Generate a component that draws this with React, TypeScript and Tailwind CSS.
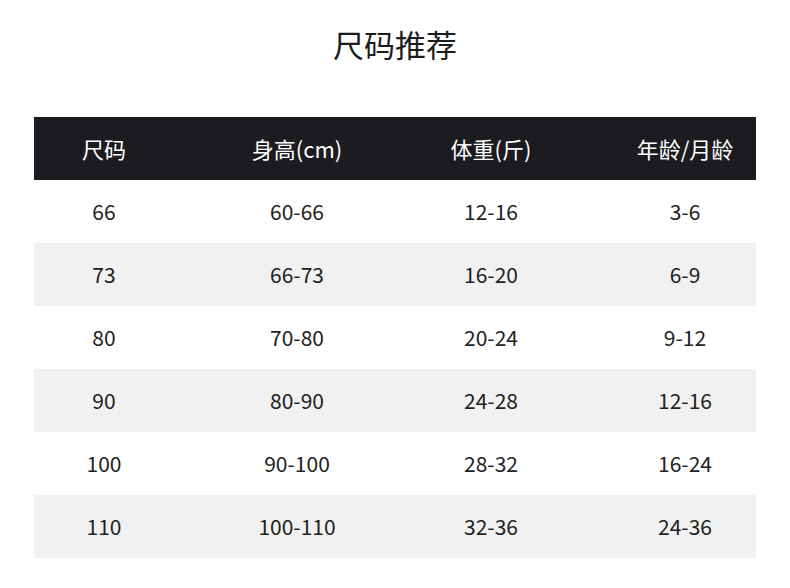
const header = ["尺码", "身高(cm)", "体重(斤)", "年龄/月龄"];

const rows = [
  ["66", "60-66", "12-16", "3-6"],
  ["73", "66-73", "16-20", "6-9"],
  ["80", "70-80", "20-24", "9-12"],
  ["90", "80-90", "24-28", "12-16"],
  ["100", "90-100", "28-32", "16-24"],
  ["110", "100-110", "32-36", "24-36"],
];

const cellClass = [
  "w-[140px] shrink-0 text-center",
  "w-[194px] shrink-0 ml-[26px] text-center",
  "w-[194px] shrink-0 text-center",
  "w-[194px] shrink-0 text-center",
];

function Row({ cells, className }: { cells: string[]; className: string }) {
  return (
    <div className={`flex items-center h-[63px] ${className}`}>
      {cells.map((c, i) => (
        <span key={i} className={cellClass[i]}>
          {c}
        </span>
      ))}
    </div>
  );
}

export default function App() {
  return (
    <div
      className="w-[790px] h-[588px] bg-white overflow-hidden"
      style={{ fontFamily: '"Noto Sans CJK SC", "Noto Sans", sans-serif' }}
    >
      <div className="h-[117px] pt-[23px] text-center text-[31px] leading-[42px] text-[#1c1c1c]">
        尺码推荐
      </div>
      <div className="mx-[34px] w-[722px]">
        <Row cells={header} className="bg-[#1b1b20] text-white text-[22px]" />
        {rows.map((r, i) => (
          <Row
            key={i}
            cells={r}
            className={`text-[21px] text-[#222] ${i % 2 === 1 ? "bg-[#f1f1f1]" : "bg-white"}`}
          />
        ))}
      </div>
    </div>
  );
}
